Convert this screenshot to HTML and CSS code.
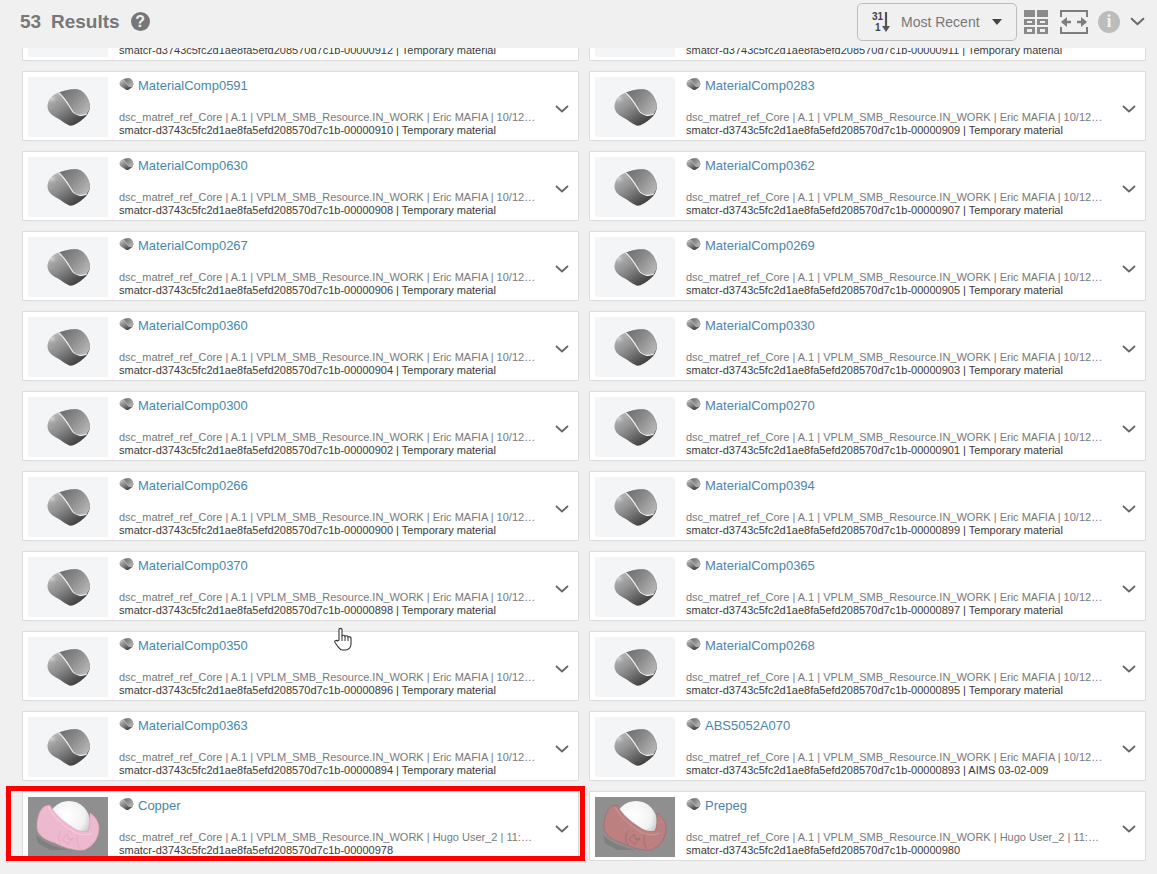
FILE: index.html
```html
<!DOCTYPE html>
<html lang="en">
<head>
<meta charset="utf-8">
<title>53 Results</title>
<link rel="stylesheet" href="styles.css">
</head>
<body>
<svg class="defs" width="0" height="0" aria-hidden="true">
  <defs>
    <linearGradient id="gLeft" x1=".1" y1=".1" x2=".75" y2=".95">
      <stop offset="0" stop-color="#bcbcbc"/>
      <stop offset=".45" stop-color="#8c8c8c"/>
      <stop offset="1" stop-color="#3a3a3a"/>
    </linearGradient>
    <radialGradient id="gGlow" cx=".2" cy=".3" r=".3">
      <stop offset="0" stop-color="#d6d6d6"/>
      <stop offset="1" stop-color="#a0a0a0" stop-opacity="0"/>
    </radialGradient>
    <linearGradient id="gRight" x1="0" y1="0" x2="1" y2=".7">
      <stop offset="0" stop-color="#6a6a6a"/>
      <stop offset=".5" stop-color="#8a8a8a"/>
      <stop offset="1" stop-color="#b4b4b4"/>
    </linearGradient>
    <radialGradient id="gBall" cx=".45" cy=".35" r=".7">
      <stop offset="0" stop-color="#ffffff"/>
      <stop offset=".6" stop-color="#f2f2f2"/>
      <stop offset="1" stop-color="#b5b5b5"/>
    </radialGradient>
    <symbol id="blob" viewBox="0 0 80 60">
      <path d="M19.500 28C21 21 26 17 31 15.500C37 13 44 11.500 50 12.500C56 14 61 21 62 29C62 34 59 39 55 42C50 46 46 49 42 48.700C37 47 33 43 29 41C23 38 19 34 19.500 28Z" fill="url(#gLeft)"/>
      <path d="M19.500 28C21 21 26 17 31 15.500C36 20 39 26 42 31C37 38 25 38 19.500 28Z" fill="url(#gGlow)"/>
      <path d="M31 15.500C37 13 44 11.500 50 12.500C56 14 61 21 62 29C62 32 60 35 58.700 37C53 39.500 48 38 45 35C41 29 38 22 31 15.500Z" fill="url(#gRight)"/>
      <path d="M31 16C38 22 41 29 45 35C48 38.300 53.500 39.500 58.700 37" fill="none" stroke="#f2f2f2" stroke-width="1.100"/>
    </symbol>
    <symbol id="shell" viewBox="0 0 80 60">
      <path d="M8 38C16 46 28 50 40 53L22 53L10 46Z" fill="#7f7f7f"/>
      <circle cx="41" cy="25" r="21" fill="url(#gBall)"/>
      <path d="M9 30C9 20 12 12 17 9L22 8C25 14 31 22 47 32C52 34.500 57 35 60 34C62 30 62 24 62 16C67 19 71 25 71 31C71 40 66 49 56 53C46 54 35 50 27 46C17 43 9 38 9 30Z" class="shell-body"/>
      <path d="M20 10C25 19 33 27 46 35C52 38 59 39 64 36" fill="none" class="shell-light"/>
      <path d="M33 34C30 38 30 43 33 48M50 38C48 43 49 47 52 52" fill="none" class="shell-line"/>
      <path d="M34 43L39 37L41 43L45 41L40 47Z" fill="none" class="shell-line"/>
    </symbol>
    <symbol id="chev" viewBox="0 0 14 8">
      <path d="M1 1L7 6.500L13 1" fill="none" stroke="#666" stroke-width="1.800"/>
    </symbol>
  </defs>
</svg>

<header class="topbar">
  <div class="summary">
    <span class="count">53</span>
    <span class="label">Results</span>
    <span class="help">?</span>
  </div>
  <div class="tools">
    <button class="sort" type="button">
      <svg class="sort-icon" width="20" height="24" viewBox="0 0 20 24">
        <text x="1" y="10" class="sort-num">31</text>
        <text x="4" y="21" class="sort-num">1</text>
        <path d="M15 2V18" stroke="#555" stroke-width="2.200"/>
        <path d="M11 16H19L15 22Z" fill="#555"/>
      </svg>
      <span class="sort-text">Most Recent</span>
      <span class="caret"></span>
    </button>
    <svg class="tool-grid" width="24" height="24" viewBox="0 0 24 24" fill="#8a8a8a">
      <path d="M0 0H11V7H0ZM13 0H24V7H13Z"/>
      <path d="M0 9H11V15H0ZM13 9H24V15H13ZM3 11V13H8V11ZM16 11V13H21V11Z" fill-rule="evenodd"/>
      <path d="M0 17H11V24H0ZM13 17H24V24H13ZM3 19V22H8V19ZM16 19V22H21V19Z" fill-rule="evenodd"/>
    </svg>
    <svg class="tool-expand" width="28" height="24" viewBox="0 0 28 24" fill="none" stroke="#7d7d7d" stroke-width="2">
      <path d="M1 7V1H27V7M1 17V23H27V17"/>
      <path d="M2 12H11M17 12H26" stroke-width="2.400"/>
      <path d="M7 7L1 12L7 17ZM21 7L27 12L21 17Z" fill="#7d7d7d" stroke="none"/>
    </svg>
    <span class="info">i</span>
    <svg class="tool-chev" width="15" height="9"><use href="#chev"/></svg>
  </div>
</header>

<main class="viewport">
  <div class="results">
    <article class="card">
      <div class="thumb"><svg class="thumb-art"><use href="#blob"/></svg></div>
      <div class="body">
        <div class="title"><svg class="mini" viewBox="18 10 46 40"><use href="#blob" width="80" height="60"/></svg><a class="name">MaterialComp0127</a></div>
        <p class="meta">dsc_matref_ref_Core | A.1 | VPLM_SMB_Resource.IN_WORK | Eric MAFIA | 10/12/2020 9:41:22 AM</p>
        <p class="ident">smatcr-d3743c5fc2d1ae8fa5efd208570d7c1b-00000912 | Temporary material</p>
      </div>
      <svg class="more"><use href="#chev"/></svg>
    </article>
    <article class="card">
      <div class="thumb"><svg class="thumb-art"><use href="#blob"/></svg></div>
      <div class="body">
        <div class="title"><svg class="mini" viewBox="18 10 46 40"><use href="#blob" width="80" height="60"/></svg><a class="name">MaterialComp0128</a></div>
        <p class="meta">dsc_matref_ref_Core | A.1 | VPLM_SMB_Resource.IN_WORK | Eric MAFIA | 10/12/2020 9:41:22 AM</p>
        <p class="ident">smatcr-d3743c5fc2d1ae8fa5efd208570d7c1b-00000911 | Temporary material</p>
      </div>
      <svg class="more"><use href="#chev"/></svg>
    </article>

    <article class="card">
      <div class="thumb"><svg class="thumb-art"><use href="#blob"/></svg></div>
      <div class="body">
        <div class="title"><svg class="mini" viewBox="18 10 46 40"><use href="#blob" width="80" height="60"/></svg><a class="name">MaterialComp0591</a></div>
        <p class="meta">dsc_matref_ref_Core | A.1 | VPLM_SMB_Resource.IN_WORK | Eric MAFIA | 10/12/2020 9:41:22 AM</p>
        <p class="ident">smatcr-d3743c5fc2d1ae8fa5efd208570d7c1b-00000910 | Temporary material</p>
      </div>
      <svg class="more"><use href="#chev"/></svg>
    </article>
    <article class="card">
      <div class="thumb"><svg class="thumb-art"><use href="#blob"/></svg></div>
      <div class="body">
        <div class="title"><svg class="mini" viewBox="18 10 46 40"><use href="#blob" width="80" height="60"/></svg><a class="name">MaterialComp0283</a></div>
        <p class="meta">dsc_matref_ref_Core | A.1 | VPLM_SMB_Resource.IN_WORK | Eric MAFIA | 10/12/2020 9:41:22 AM</p>
        <p class="ident">smatcr-d3743c5fc2d1ae8fa5efd208570d7c1b-00000909 | Temporary material</p>
      </div>
      <svg class="more"><use href="#chev"/></svg>
    </article>

    <article class="card">
      <div class="thumb"><svg class="thumb-art"><use href="#blob"/></svg></div>
      <div class="body">
        <div class="title"><svg class="mini" viewBox="18 10 46 40"><use href="#blob" width="80" height="60"/></svg><a class="name">MaterialComp0630</a></div>
        <p class="meta">dsc_matref_ref_Core | A.1 | VPLM_SMB_Resource.IN_WORK | Eric MAFIA | 10/12/2020 9:41:22 AM</p>
        <p class="ident">smatcr-d3743c5fc2d1ae8fa5efd208570d7c1b-00000908 | Temporary material</p>
      </div>
      <svg class="more"><use href="#chev"/></svg>
    </article>
    <article class="card">
      <div class="thumb"><svg class="thumb-art"><use href="#blob"/></svg></div>
      <div class="body">
        <div class="title"><svg class="mini" viewBox="18 10 46 40"><use href="#blob" width="80" height="60"/></svg><a class="name">MaterialComp0362</a></div>
        <p class="meta">dsc_matref_ref_Core | A.1 | VPLM_SMB_Resource.IN_WORK | Eric MAFIA | 10/12/2020 9:41:22 AM</p>
        <p class="ident">smatcr-d3743c5fc2d1ae8fa5efd208570d7c1b-00000907 | Temporary material</p>
      </div>
      <svg class="more"><use href="#chev"/></svg>
    </article>

    <article class="card">
      <div class="thumb"><svg class="thumb-art"><use href="#blob"/></svg></div>
      <div class="body">
        <div class="title"><svg class="mini" viewBox="18 10 46 40"><use href="#blob" width="80" height="60"/></svg><a class="name">MaterialComp0267</a></div>
        <p class="meta">dsc_matref_ref_Core | A.1 | VPLM_SMB_Resource.IN_WORK | Eric MAFIA | 10/12/2020 9:41:22 AM</p>
        <p class="ident">smatcr-d3743c5fc2d1ae8fa5efd208570d7c1b-00000906 | Temporary material</p>
      </div>
      <svg class="more"><use href="#chev"/></svg>
    </article>
    <article class="card">
      <div class="thumb"><svg class="thumb-art"><use href="#blob"/></svg></div>
      <div class="body">
        <div class="title"><svg class="mini" viewBox="18 10 46 40"><use href="#blob" width="80" height="60"/></svg><a class="name">MaterialComp0269</a></div>
        <p class="meta">dsc_matref_ref_Core | A.1 | VPLM_SMB_Resource.IN_WORK | Eric MAFIA | 10/12/2020 9:41:22 AM</p>
        <p class="ident">smatcr-d3743c5fc2d1ae8fa5efd208570d7c1b-00000905 | Temporary material</p>
      </div>
      <svg class="more"><use href="#chev"/></svg>
    </article>

    <article class="card">
      <div class="thumb"><svg class="thumb-art"><use href="#blob"/></svg></div>
      <div class="body">
        <div class="title"><svg class="mini" viewBox="18 10 46 40"><use href="#blob" width="80" height="60"/></svg><a class="name">MaterialComp0360</a></div>
        <p class="meta">dsc_matref_ref_Core | A.1 | VPLM_SMB_Resource.IN_WORK | Eric MAFIA | 10/12/2020 9:41:22 AM</p>
        <p class="ident">smatcr-d3743c5fc2d1ae8fa5efd208570d7c1b-00000904 | Temporary material</p>
      </div>
      <svg class="more"><use href="#chev"/></svg>
    </article>
    <article class="card">
      <div class="thumb"><svg class="thumb-art"><use href="#blob"/></svg></div>
      <div class="body">
        <div class="title"><svg class="mini" viewBox="18 10 46 40"><use href="#blob" width="80" height="60"/></svg><a class="name">MaterialComp0330</a></div>
        <p class="meta">dsc_matref_ref_Core | A.1 | VPLM_SMB_Resource.IN_WORK | Eric MAFIA | 10/12/2020 9:41:22 AM</p>
        <p class="ident">smatcr-d3743c5fc2d1ae8fa5efd208570d7c1b-00000903 | Temporary material</p>
      </div>
      <svg class="more"><use href="#chev"/></svg>
    </article>

    <article class="card">
      <div class="thumb"><svg class="thumb-art"><use href="#blob"/></svg></div>
      <div class="body">
        <div class="title"><svg class="mini" viewBox="18 10 46 40"><use href="#blob" width="80" height="60"/></svg><a class="name">MaterialComp0300</a></div>
        <p class="meta">dsc_matref_ref_Core | A.1 | VPLM_SMB_Resource.IN_WORK | Eric MAFIA | 10/12/2020 9:41:22 AM</p>
        <p class="ident">smatcr-d3743c5fc2d1ae8fa5efd208570d7c1b-00000902 | Temporary material</p>
      </div>
      <svg class="more"><use href="#chev"/></svg>
    </article>
    <article class="card">
      <div class="thumb"><svg class="thumb-art"><use href="#blob"/></svg></div>
      <div class="body">
        <div class="title"><svg class="mini" viewBox="18 10 46 40"><use href="#blob" width="80" height="60"/></svg><a class="name">MaterialComp0270</a></div>
        <p class="meta">dsc_matref_ref_Core | A.1 | VPLM_SMB_Resource.IN_WORK | Eric MAFIA | 10/12/2020 9:41:22 AM</p>
        <p class="ident">smatcr-d3743c5fc2d1ae8fa5efd208570d7c1b-00000901 | Temporary material</p>
      </div>
      <svg class="more"><use href="#chev"/></svg>
    </article>

    <article class="card">
      <div class="thumb"><svg class="thumb-art"><use href="#blob"/></svg></div>
      <div class="body">
        <div class="title"><svg class="mini" viewBox="18 10 46 40"><use href="#blob" width="80" height="60"/></svg><a class="name">MaterialComp0266</a></div>
        <p class="meta">dsc_matref_ref_Core | A.1 | VPLM_SMB_Resource.IN_WORK | Eric MAFIA | 10/12/2020 9:41:22 AM</p>
        <p class="ident">smatcr-d3743c5fc2d1ae8fa5efd208570d7c1b-00000900 | Temporary material</p>
      </div>
      <svg class="more"><use href="#chev"/></svg>
    </article>
    <article class="card">
      <div class="thumb"><svg class="thumb-art"><use href="#blob"/></svg></div>
      <div class="body">
        <div class="title"><svg class="mini" viewBox="18 10 46 40"><use href="#blob" width="80" height="60"/></svg><a class="name">MaterialComp0394</a></div>
        <p class="meta">dsc_matref_ref_Core | A.1 | VPLM_SMB_Resource.IN_WORK | Eric MAFIA | 10/12/2020 9:41:22 AM</p>
        <p class="ident">smatcr-d3743c5fc2d1ae8fa5efd208570d7c1b-00000899 | Temporary material</p>
      </div>
      <svg class="more"><use href="#chev"/></svg>
    </article>

    <article class="card">
      <div class="thumb"><svg class="thumb-art"><use href="#blob"/></svg></div>
      <div class="body">
        <div class="title"><svg class="mini" viewBox="18 10 46 40"><use href="#blob" width="80" height="60"/></svg><a class="name">MaterialComp0370</a></div>
        <p class="meta">dsc_matref_ref_Core | A.1 | VPLM_SMB_Resource.IN_WORK | Eric MAFIA | 10/12/2020 9:41:22 AM</p>
        <p class="ident">smatcr-d3743c5fc2d1ae8fa5efd208570d7c1b-00000898 | Temporary material</p>
      </div>
      <svg class="more"><use href="#chev"/></svg>
    </article>
    <article class="card">
      <div class="thumb"><svg class="thumb-art"><use href="#blob"/></svg></div>
      <div class="body">
        <div class="title"><svg class="mini" viewBox="18 10 46 40"><use href="#blob" width="80" height="60"/></svg><a class="name">MaterialComp0365</a></div>
        <p class="meta">dsc_matref_ref_Core | A.1 | VPLM_SMB_Resource.IN_WORK | Eric MAFIA | 10/12/2020 9:41:22 AM</p>
        <p class="ident">smatcr-d3743c5fc2d1ae8fa5efd208570d7c1b-00000897 | Temporary material</p>
      </div>
      <svg class="more"><use href="#chev"/></svg>
    </article>

    <article class="card">
      <div class="thumb"><svg class="thumb-art"><use href="#blob"/></svg></div>
      <div class="body">
        <div class="title"><svg class="mini" viewBox="18 10 46 40"><use href="#blob" width="80" height="60"/></svg><a class="name">MaterialComp0350</a></div>
        <p class="meta">dsc_matref_ref_Core | A.1 | VPLM_SMB_Resource.IN_WORK | Eric MAFIA | 10/12/2020 9:41:22 AM</p>
        <p class="ident">smatcr-d3743c5fc2d1ae8fa5efd208570d7c1b-00000896 | Temporary material</p>
      </div>
      <svg class="more"><use href="#chev"/></svg>
    </article>
    <article class="card">
      <div class="thumb"><svg class="thumb-art"><use href="#blob"/></svg></div>
      <div class="body">
        <div class="title"><svg class="mini" viewBox="18 10 46 40"><use href="#blob" width="80" height="60"/></svg><a class="name">MaterialComp0268</a></div>
        <p class="meta">dsc_matref_ref_Core | A.1 | VPLM_SMB_Resource.IN_WORK | Eric MAFIA | 10/12/2020 9:41:22 AM</p>
        <p class="ident">smatcr-d3743c5fc2d1ae8fa5efd208570d7c1b-00000895 | Temporary material</p>
      </div>
      <svg class="more"><use href="#chev"/></svg>
    </article>

    <article class="card">
      <div class="thumb"><svg class="thumb-art"><use href="#blob"/></svg></div>
      <div class="body">
        <div class="title"><svg class="mini" viewBox="18 10 46 40"><use href="#blob" width="80" height="60"/></svg><a class="name">MaterialComp0363</a></div>
        <p class="meta">dsc_matref_ref_Core | A.1 | VPLM_SMB_Resource.IN_WORK | Eric MAFIA | 10/12/2020 9:41:22 AM</p>
        <p class="ident">smatcr-d3743c5fc2d1ae8fa5efd208570d7c1b-00000894 | Temporary material</p>
      </div>
      <svg class="more"><use href="#chev"/></svg>
    </article>
    <article class="card">
      <div class="thumb"><svg class="thumb-art"><use href="#blob"/></svg></div>
      <div class="body">
        <div class="title"><svg class="mini" viewBox="18 10 46 40"><use href="#blob" width="80" height="60"/></svg><a class="name">ABS5052A070</a></div>
        <p class="meta">dsc_matref_ref_Core | A.1 | VPLM_SMB_Resource.IN_WORK | Eric MAFIA | 10/12/2020 9:41:22 AM</p>
        <p class="ident">smatcr-d3743c5fc2d1ae8fa5efd208570d7c1b-00000893 | AIMS 03-02-009</p>
      </div>
      <svg class="more"><use href="#chev"/></svg>
    </article>

    <article class="card">
      <div class="thumb thumb-dark copper"><svg class="thumb-art"><use href="#shell"/></svg></div>
      <div class="body">
        <div class="title"><svg class="mini" viewBox="18 10 46 40"><use href="#blob" width="80" height="60"/></svg><a class="name">Copper</a></div>
        <p class="meta">dsc_matref_ref_Core | A.1 | VPLM_SMB_Resource.IN_WORK | Hugo User_2 | 11:42:16 AM 12/10/2020</p>
        <p class="ident">smatcr-d3743c5fc2d1ae8fa5efd208570d7c1b-00000978</p>
      </div>
      <svg class="more"><use href="#chev"/></svg>
    </article>
    <article class="card">
      <div class="thumb thumb-dark prepeg"><svg class="thumb-art"><use href="#shell"/></svg></div>
      <div class="body">
        <div class="title"><svg class="mini" viewBox="18 10 46 40"><use href="#blob" width="80" height="60"/></svg><a class="name">Prepeg</a></div>
        <p class="meta">dsc_matref_ref_Core | A.1 | VPLM_SMB_Resource.IN_WORK | Hugo User_2 | 11:42:16 AM 12/10/2020</p>
        <p class="ident">smatcr-d3743c5fc2d1ae8fa5efd208570d7c1b-00000980</p>
      </div>
      <svg class="more"><use href="#chev"/></svg>
    </article>
  </div>
</main>

<div class="highlight"></div>
<svg class="cursor" width="18" height="24" viewBox="0 0 18 24">
  <path d="M5 13V2.500C5 1 8 1 8 2.500V9C8 8 11 8 11 9.500C11 8.500 14 8.500 14 10C14 9.500 17 9.500 17 11V17C17 20 15 23 11.500 23H8.500C6 23 5 21 3.500 19L1 15.500C0 14 2 12.500 3.500 14Z" fill="#fff" stroke="#333" stroke-width="1.100" stroke-linejoin="round"/>
  <path d="M8 9V14M11 9.500V14M14 10V14" fill="none" stroke="#333"/>
</svg>
</body>
</html>
```
FILE: styles.css
```css
* {
  box-sizing: border-box;
}

html,
body {
  margin: 0;
  height: 874px;
  overflow: hidden;
}

body {
  position: relative;
  background: #f0f0f0;
  font-family: "Liberation Sans", Arial, sans-serif;
  color: #333;
}

.defs {
  display: block;
  height: 0;
}

.topbar {
  position: relative;
  z-index: 2;
  display: flex;
  align-items: center;
  justify-content: space-between;
  height: 48px;
  padding: 0 12px 5px 20px;
  background: #f0f0f0;
}

.summary {
  display: flex;
  align-items: center;
  color: #777;
  font-size: 19px;
  font-weight: 700;
}

.count {
  width: 31px;
}

.help {
  display: flex;
  align-items: center;
  justify-content: center;
  width: 19px;
  height: 19px;
  margin-left: 11px;
  border-radius: 50%;
  background: #777;
  color: #f0f0f0;
  font-size: 16px;
  font-weight: 700;
}

.tools {
  display: flex;
  align-items: center;
}

.sort {
  display: flex;
  align-items: center;
  width: 160px;
  height: 38px;
  padding: 0 14px 0 13px;
  border: 1px solid #bdbdbd;
  border-radius: 5px;
  background: #f0f0f0;
  font-family: inherit;
}

.sort-icon {
  flex: none;
}

.sort-num {
  fill: #444;
  font-size: 10px;
  font-weight: 700;
  font-family: "Liberation Sans", Arial, sans-serif;
}

.sort-text {
  margin-left: 10px;
  color: #777;
  font-size: 14px;
}

.caret {
  width: 0;
  height: 0;
  margin-left: auto;
  border-left: 5px solid transparent;
  border-right: 5px solid transparent;
  border-top: 6px solid #444;
}

.tool-grid {
  margin-left: 7px;
}

.tool-expand {
  margin-left: 12px;
}

.info {
  display: flex;
  align-items: center;
  justify-content: center;
  width: 22px;
  height: 22px;
  margin-left: 10px;
  border-radius: 50%;
  background: #bcbcbc;
  color: #f0f0f0;
  font-family: "Liberation Serif", serif;
  font-size: 18px;
  font-weight: 700;
}

.tool-chev {
  margin-left: 10px;
}

.viewport {
  height: 826px;
  overflow: hidden;
}

.results {
  display: grid;
  grid-template-columns: 557px 557px;
  grid-auto-rows: 70px;
  gap: 10px;
  margin-top: -57px;
  padding-left: 22px;
}

.card {
  display: flex;
  align-items: stretch;
  padding: 5px 5px 3px;
  border: 1px solid #dcdcdc;
  background: #fff;
}

.thumb {
  flex: none;
  width: 80px;
  height: 60px;
  background: #f4f5f7;
}

.thumb-art {
  display: block;
  width: 80px;
  height: 60px;
}

.thumb-dark {
  background: #8f8f8f;
}

.copper {
  --shell: #eeb9cf;
  --shell-line: #dca0bb;
  --shell-light: #f5cfdf;
}

.prepeg {
  --shell: #bd8080;
  --shell-line: #965f5f;
  --shell-light: #cf9a9a;
}

.shell-body {
  fill: var(--shell);
  stroke: var(--shell-line);
  stroke-width: .5;
}

.shell-line {
  stroke: var(--shell-line);
  stroke-width: .6;
}

.shell-light {
  stroke: var(--shell-light);
  stroke-width: 1;
}

.body {
  display: flex;
  flex-direction: column;
  flex: none;
  width: 417px;
  margin-left: 11px;
}

.title {
  display: flex;
  align-items: flex-start;
  height: 17px;
}

.mini {
  flex: none;
  width: 15px;
  height: 14px;
}

.name {
  margin: 1px 0 0 4px;
  color: #4a86a8;
  font-size: 13px;
  line-height: 16px;
}

.meta,
.ident {
  margin: 0;
  font-size: 11px;
  line-height: 13px;
  white-space: nowrap;
  overflow: hidden;
  text-overflow: ellipsis;
}

.meta {
  margin-top: auto;
  color: #77797c;
}

.ident {
  color: #3a3a3a;
}

.more {
  flex: none;
  width: 14px;
  height: 8px;
  margin: 28px 0 0 19px;
}

.highlight {
  position: absolute;
  left: 6px;
  top: 786px;
  width: 579px;
  height: 75px;
  border: 5px solid #ff0000;
  z-index: 3;
}

.cursor {
  position: absolute;
  left: 334px;
  top: 627px;
  z-index: 3;
}
```
